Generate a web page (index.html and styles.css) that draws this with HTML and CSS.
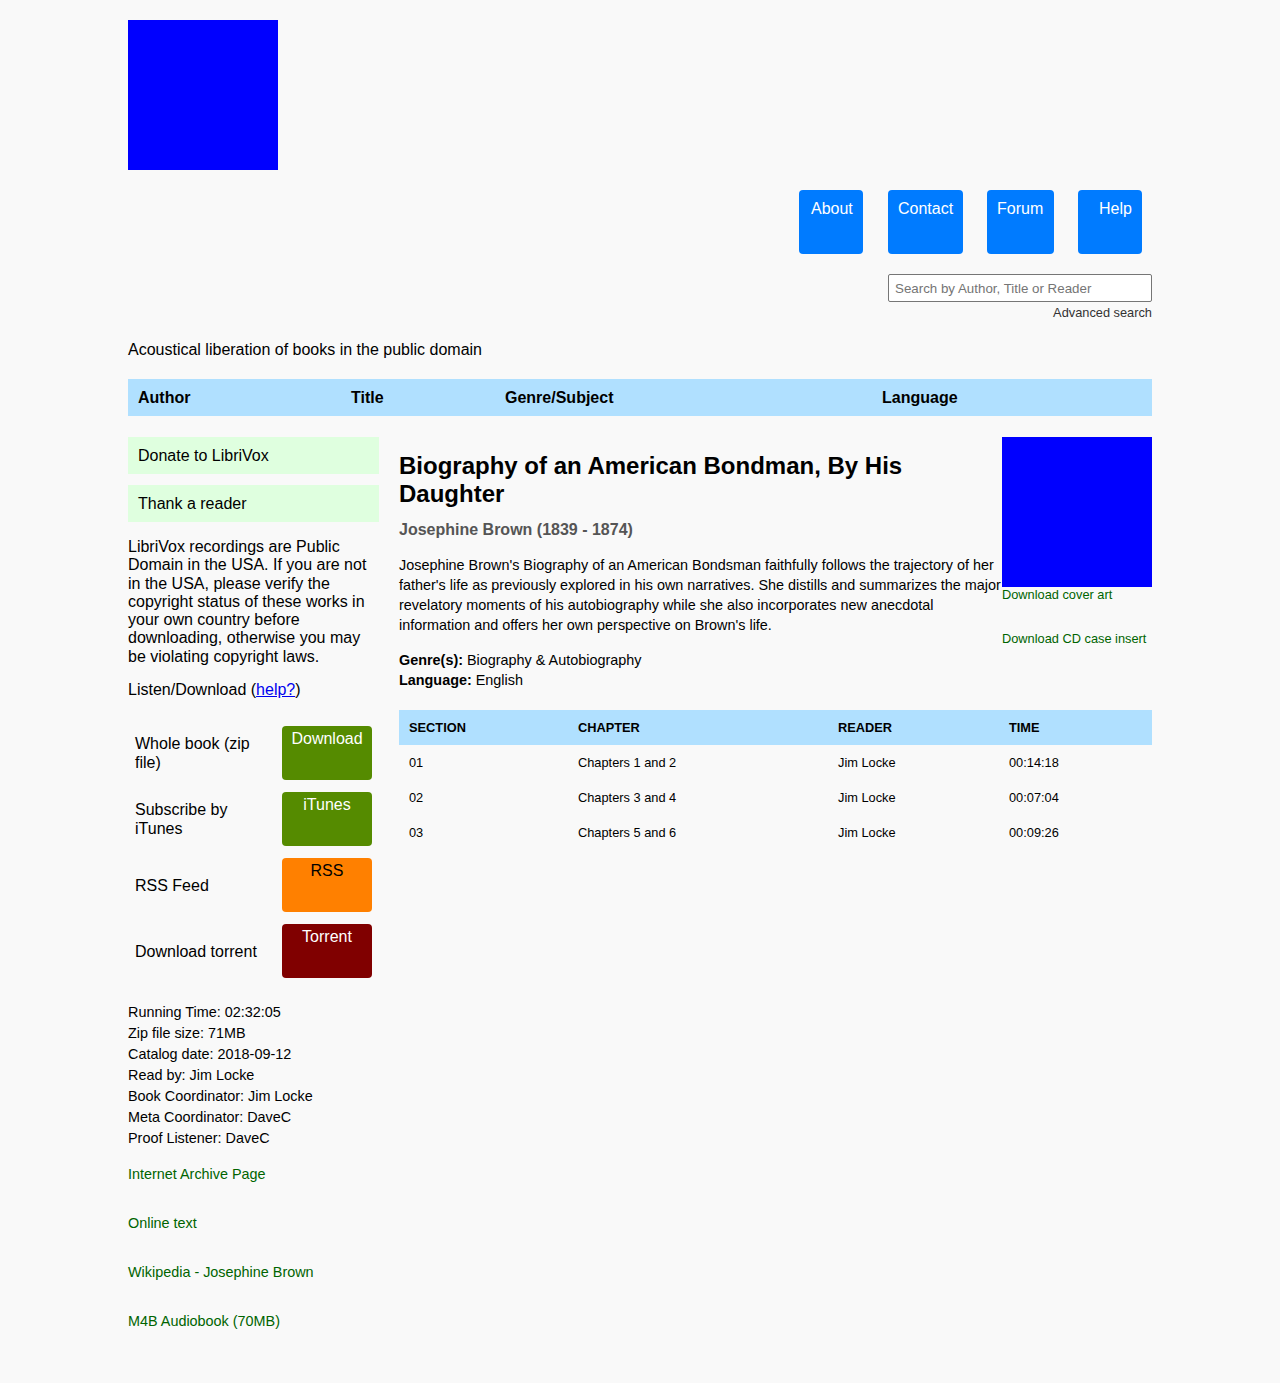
FILE: index.html
```html
<!DOCTYPE html>
<html lang="en">
<head>
<meta charset="utf-8">
<title>Biography of an American Bondman, By His Daughter - LibriVox</title>
<link rel="stylesheet" href="styles.css">
</head>
<body>
<div class="page">
  <header class="header">
    <div class="logo"></div>
    <nav class="topnav">
      <a class="navbtn nav-about" href="#">About</a>
      <a class="navbtn nav-contact" href="#">Contact</a>
      <a class="navbtn nav-forum" href="#">Forum</a>
      <a class="navbtn nav-help" href="#">Help</a>
    </nav>
    <div class="search">
      <input class="search-input" type="text" placeholder="Search by Author, Title or Reader">
      <a class="adv" href="#">Advanced search</a>
    </div>
    <p class="tagline">Acoustical liberation of books in the public domain</p>
  </header>

  <div class="browse">
    <div class="b-author">Author</div>
    <div class="b-title">Title</div>
    <div class="b-genre">Genre/Subject</div>
    <div class="b-lang">Language</div>
  </div>

  <div class="content">
    <aside class="sidebar">
      <div class="greenbox">Donate to LibriVox</div>
      <div class="greenbox">Thank a reader</div>
      <p class="pd">LibriVox recordings are Public Domain in the USA. If you are not in the USA, please verify the copyright status of these works in your own country before downloading, otherwise you may be violating copyright laws.</p>
      <p class="listen">Listen/Download (<a href="#" class="help">help?</a>)</p>
      <div class="dl">
        <div class="dl-row"><div class="dl-label">Whole book (zip file)</div><a class="dl-btn green" href="#">Download</a></div>
        <div class="dl-row"><div class="dl-label">Subscribe by iTunes</div><a class="dl-btn green" href="#">iTunes</a></div>
        <div class="dl-row"><div class="dl-label">RSS Feed</div><a class="dl-btn orange" href="#">RSS</a></div>
        <div class="dl-row"><div class="dl-label">Download torrent</div><a class="dl-btn maroon" href="#">Torrent</a></div>
      </div>
      <div class="info">
        <div>Running Time: 02:32:05</div>
        <div>Zip file size: 71MB</div>
        <div>Catalog date: 2018-09-12</div>
        <div>Read by: Jim Locke</div>
        <div>Book Coordinator: Jim Locke</div>
        <div>Meta Coordinator: DaveC</div>
        <div>Proof Listener: DaveC</div>
      </div>
      <div class="links">
        <a href="#">Internet Archive Page</a>
        <a href="#">Online text</a>
        <a href="#">Wikipedia - Josephine Brown</a>
        <a href="#">M4B Audiobook (70MB)</a>
      </div>
    </aside>

    <main class="main">
      <div class="coverbox">
        <div class="cover"></div>
        <a class="cover-link" href="#">Download cover art</a>
        <a class="cover-link cd" href="#">Download CD case insert</a>
      </div>
      <h1 class="title">Biography of an American Bondman, By His Daughter</h1>
      <p class="author">Josephine Brown (1839 - 1874)</p>
      <p class="desc">Josephine Brown's Biography of an American Bondsman faithfully follows the trajectory of her father's life as previously explored in his own narratives. She distills and summarizes the major revelatory moments of his autobiography while she also incorporates new anecdotal information and offers her own perspective on Brown's life.</p>
      <p class="meta"><b>Genre(s):</b> Biography &amp; Autobiography<br><b>Language:</b> English</p>
      <table class="chapters">
        <thead>
          <tr><th class="c1">SECTION</th><th class="c2">CHAPTER</th><th class="c3">READER</th><th class="c4">TIME</th></tr>
        </thead>
        <tbody>
          <tr><td>01</td><td>Chapters 1 and 2</td><td>Jim Locke</td><td>00:14:18</td></tr>
          <tr><td>02</td><td>Chapters 3 and 4</td><td>Jim Locke</td><td>00:07:04</td></tr>
          <tr><td>03</td><td>Chapters 5 and 6</td><td>Jim Locke</td><td>00:09:26</td></tr>
        </tbody>
      </table>
    </main>
  </div>
</div>
</body>
</html>
```

FILE: styles.css
```css
html, body {
  margin: 0;
  padding: 0;
  background: #f9f9f9;
}
body {
  font-family: "Liberation Sans", Arial, sans-serif;
  font-size: 16px;
  color: #000;
}
a { text-decoration: none; }

.page {
  width: 1024px;
  margin: 0 auto;
  padding: 20px 0 40px;
}

/* header */
.header {
  display: flex;
  flex-direction: column;
}
.logo {
  width: 150px;
  height: 150px;
  background: #0000ff;
}
.topnav {
  display: flex;
  justify-content: flex-end;
  gap: 24px;
  margin-top: 20px;
  padding-right: 10px;
}
.navbtn {
  display: block;
  box-sizing: border-box;
  height: 64px;
  padding: 10px 0 0 10px;
  background: #007bff;
  color: #fff;
  border-radius: 4px;
  font-size: 16px;
  line-height: 18px;
}
.nav-about { width: 64px; padding-left: 12px; margin-right: 1px; }
.nav-contact { width: 75px; }
.nav-forum { width: 67px; }
.nav-help { width: 64px; padding-left: 21px; }

.search {
  display: flex;
  flex-direction: column;
  align-items: flex-end;
  margin-top: 20px;
}
.search-input {
  box-sizing: border-box;
  width: 264px;
  height: 28px;
  border: 1px solid #767676;
  border-radius: 2px;
  background: #fff;
  padding: 0 6px;
  font-family: "Liberation Sans", Arial, sans-serif;
  font-size: 13.333px;
}
.search-input::placeholder { color: #757575; }
.adv {
  margin-top: 3px;
  font-size: 12.8px;
  line-height: 15px;
  color: #333;
}
.tagline {
  margin: 21px 0 0;
  line-height: 18px;
}

/* browse bar */
.browse {
  display: flex;
  height: 37px;
  align-items: center;
  margin-top: 20px;
  background: #b0e0ff;
  font-weight: bold;
}
.browse > div { box-sizing: border-box; padding-left: 10px; }
.b-author { width: 213px; }
.b-title { width: 154px; }
.b-genre { width: 377px; }
.b-lang { width: 280px; }

/* content */
.content {
  display: grid;
  grid-template-columns: 251px 1fr;
  column-gap: 20px;
  margin-top: 21px;
}

.greenbox {
  background: #dfffdf;
  height: 37px;
  line-height: 37px;
  padding-left: 10px;
  margin-bottom: 11px;
}
.pd {
  margin: 16px 0 0;
  line-height: 18.3px;
}
.listen {
  margin: 15px 0 0;
  line-height: 18px;
}
.help { color: #0000ee; text-decoration: underline; }

.dl {
  display: flex;
  flex-direction: column;
  gap: 12px;
  margin-top: 27px;
}
.dl-row {
  display: flex;
  align-items: center;
}
.dl-label {
  box-sizing: border-box;
  width: 154px;
  padding: 0 7px;
  line-height: 19px;
}
.dl-btn {
  display: block;
  box-sizing: border-box;
  width: 90px;
  height: 54px;
  padding-top: 4px;
  border-radius: 4px;
  text-align: center;
  color: #fff;
  line-height: 18px;
}
.green { background: #558b00; }
.orange { background: #ff8000; color: #000; }
.maroon { background: #800000; }

.info {
  margin-top: 24px;
  font-size: 14.4px;
  line-height: 21px;
}
.links {
  display: flex;
  flex-direction: column;
  align-items: flex-start;
  gap: 28px;
  margin-top: 15px;
  font-size: 14.4px;
  line-height: 21px;
}
.links a { color: #006400; }

/* main */
.coverbox {
  float: right;
  width: 150px;
  display: flex;
  flex-direction: column;
}
.cover {
  width: 150px;
  height: 150px;
  background: #0000ff;
}
.cover-link {
  color: #006400;
  font-size: 12.8px;
  line-height: 15px;
}
.cover-link.cd { margin-top: 29px; }

.title {
  margin: 15px 0 0;
  font-size: 24px;
  line-height: 28px;
  font-weight: bold;
}
.author {
  margin: 13px 0 0;
  font-weight: bold;
  color: #555;
  line-height: 18px;
}
.desc {
  margin: 16px 0 0;
  font-size: 14.4px;
  line-height: 20px;
}
.meta {
  margin: 15px 0 0;
  font-size: 14.4px;
  line-height: 20px;
}

.chapters {
  clear: both;
  width: 100%;
  border-collapse: collapse;
  margin-top: 20px;
  font-size: 12.8px;
}
.chapters th, .chapters td {
  height: 35px;
  padding: 0 10px;
  text-align: left;
  vertical-align: middle;
}
.chapters thead tr { background: #b0e0ff; }
.chapters th { font-weight: bold; }
.c1 { width: 149px; }
.c2 { width: 240px; }
.c3 { width: 151px; }
```
